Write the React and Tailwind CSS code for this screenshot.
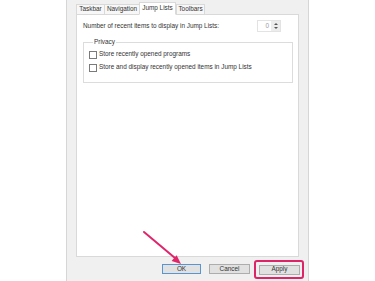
import React from 'react'

const TABS = [
  { label: 'Taskbar', width: 'w-[29px]' },
  { label: 'Navigation', width: 'w-[36px]' },
  { label: 'Jump Lists', width: 'w-[37px]', active: true },
  { label: 'Toolbars', width: 'w-[29px]' },
]

function Checkbox({ label }) {
  return (
    <label className="flex items-center gap-[2px] h-[13px]">
      <span className="w-[8px] h-[8px] border border-[#7a7a7a] bg-white shrink-0" />
      <span>{label}</span>
    </label>
  )
}

function Button({ children, primary }) {
  return (
    <button
      className={`h-[10px] flex items-center justify-center bg-[#e1e1e1] border text-[6.4px] leading-none text-[#333] ${
        primary ? 'w-[39px] border-[#5b95cf]' : 'w-[41px] border-[#adadad]'
      }`}
    >
      {children}
    </button>
  )
}

export default function App() {
  return (
    <div className="relative w-[375px] h-[281px] overflow-hidden bg-white font-['Liberation_Sans',Arial,sans-serif] text-[6.4px] leading-none text-[#333]">
      {/* Dialog window */}
      <div className="ml-[66px] w-[243px] h-full flex flex-col bg-[#f0f0f0] border-x border-[#d6d6d6]">
        {/* Tabs */}
        <div className="flex items-end h-[15px] mx-[9px] pt-[2px] -mb-px">
          {TABS.map((tab) => (
            <div
              key={tab.label}
              className={`${tab.width} flex items-center justify-center border border-[#d9d9d9] ${
                tab.active
                  ? 'h-[13px] bg-white border-b-white relative z-10'
                  : 'h-[11px] bg-[#f7f7f7] -mr-px'
              }`}
            >
              {tab.label}
            </div>
          ))}
        </div>

        {/* Panel */}
        <div className="mx-[9px] h-[243px] bg-white border border-[#d9d9d9] pl-[6px] pr-[5px]">
          <div className="flex items-center justify-between h-[12px] mt-[5px]">
            <span>Number of recent items to display in Jump Lists:</span>
            <div className="flex h-[12px] w-[24px] mr-[12px] border border-[#e3e3e3] bg-white">
              <span className="flex-1 flex items-center justify-end pr-[2px] text-[#9a9a9a]">0</span>
              <span className="w-[9px] flex flex-col items-center justify-center gap-[2px] bg-[#ececec]">
                <span className="w-0 h-0 border-x-[2px] border-x-transparent border-b-[2px] border-b-[#555]" />
                <span className="w-0 h-0 border-x-[2px] border-x-transparent border-t-[2px] border-t-[#555]" />
              </span>
            </div>
          </div>

          <fieldset className="mt-[6px] border border-[#dcdcdc] pl-[5px] pb-[8px]">
            <legend className="ml-[4px] px-[1px] leading-[8px]">Privacy</legend>
            <div className="mt-[2px] flex flex-col">
              <Checkbox label="Store recently opened programs" />
              <Checkbox label="Store and display recently opened items in Jump Lists" />
            </div>
          </fieldset>
        </div>

        {/* Buttons */}
        <div className="flex-1 flex items-center justify-end gap-[8px] pr-[4px]">
          <Button primary>OK</Button>
          <div className="flex items-center gap-[4px]">
            <Button>Cancel</Button>
            <div className="border-2 border-[#dd2467] rounded-[3px] pl-[3px] pr-[2px] pt-[3px] pb-[2px]">
              <Button>Apply</Button>
            </div>
          </div>
        </div>
      </div>

      {/* Pointer arrow */}
      <svg className="absolute inset-0 pointer-events-none" width="375" height="281" viewBox="0 0 375 281">
        <line x1="144" y1="232" x2="175" y2="258" stroke="#e0266b" strokeWidth="2" strokeLinecap="round" />
        <polygon points="181,264 171.6,260.9 176.6,255.2" fill="#e0266b" />
      </svg>
    </div>
  )
}
